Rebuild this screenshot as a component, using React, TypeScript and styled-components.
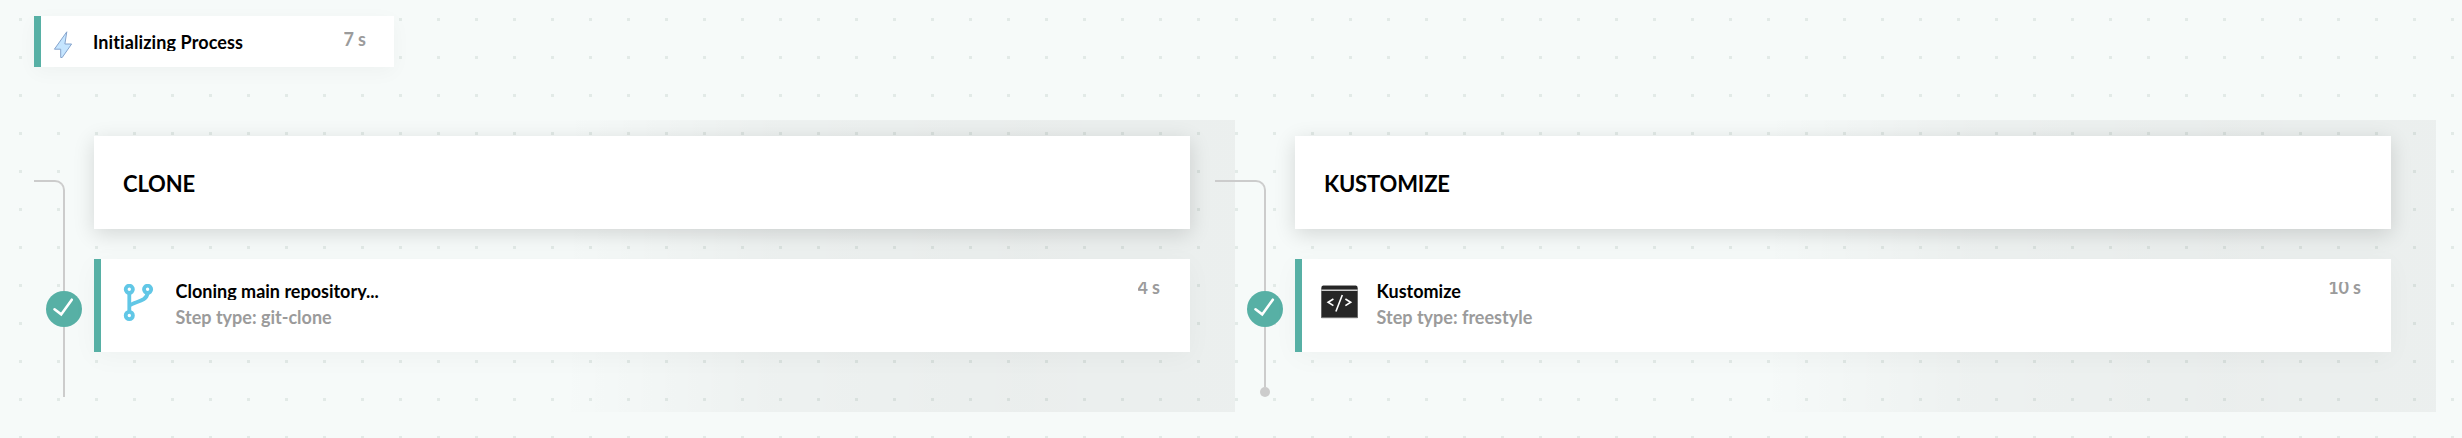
import React from 'react';
import styled, { createGlobalStyle } from 'styled-components';

const GlobalStyle = createGlobalStyle`
  *, *::before, *::after { box-sizing: border-box; }
  body {
    margin: 0;
    background: #f6faf9;
    font-family: Lato, sans-serif;
    font-variant-ligatures: none;
  }
`;

const Page = styled.main`
  height: 438px;
  padding: 16px 26px 0 34px;
  overflow: hidden;
  background-color: #f6faf9;
  background-image: conic-gradient(from 90deg at 35px 35px, #e2eae7 90deg, transparent 0);
  background-size: 38px 38px;
  background-position: -16px -17px;
`;

const InitCard = styled.section`
  display: flex;
  align-items: flex-start;
  width: 360px;
  height: 51px;
  border-left: 7px solid #57b0a5;
  padding: 0 28px 0 12px;
  background: #fff;
  box-shadow: 0 5px 20px rgba(0, 0, 0, 0.035);
`;

const BoltSlot = styled.span`
  display: flex;
  width: 40px;
  padding-top: 15px;
`;

const Title = styled.div<{ $top?: number; $spacing?: number }>`
  margin-top: ${(p) => p.$top ?? 0}px;
  height: 20px;
  overflow: hidden;
  font-size: 18px;
  font-weight: 700;
  line-height: 22px;
  letter-spacing: ${(p) => p.$spacing ?? 0}px;
  white-space: nowrap;
  color: #000;
`;

const Time = styled.div<{ $top: number; $cut?: boolean }>`
  margin: ${(p) => p.$top}px 0 0 auto;
  height: ${(p) => (p.$cut ? 16 : 24)}px;
  overflow: hidden;
  font-size: 18px;
  font-weight: 700;
  word-spacing: -0.3px;
  line-height: ${(p) => (p.$cut ? 10 : 24)}px;
  white-space: nowrap;
  color: #9b9b9b;
`;

const Stages = styled.div`
  display: flex;
  margin-top: 53px;
`;

const Stage = styled.section`
  display: flex;
  width: 1201px;
  height: 292px;
  padding-right: 45px;
  background: linear-gradient(91deg, transparent 44%, rgba(0, 0, 0, 0.035) 61%, rgba(0, 0, 0, 0.047) 82%, rgba(0, 0, 0, 0.042));
`;

const Rail = styled.div`
  flex: none;
  width: 60px;
  padding-top: 60px;
`;

const RailTop = styled.div<{ $reach: number }>`
  width: ${(p) => 31 + p.$reach}px;
  height: 111px;
  margin-left: ${(p) => -p.$reach}px;
  border: solid #ccc;
  border-width: 2px 2px 0 0;
  border-top-right-radius: 10px;
`;

const StatusBadge = styled.div`
  display: flex;
  width: 36px;
  height: 36px;
  margin-left: 12px;
  border-radius: 50%;
  background: #57b0a5;
`;

const RailBottom = styled.div<{ $length: number }>`
  width: 2px;
  height: ${(p) => p.$length}px;
  margin-left: 29px;
  background: #ccc;
`;

const RailEnd = styled.div`
  width: 10px;
  height: 10px;
  margin-left: 25px;
  border-radius: 50%;
  background: #ccc;
`;

const StageBody = styled.div`
  flex: 1;
  display: flex;
  flex-direction: column;
  gap: 30px;
  padding-top: 16px;
`;

const StageHeader = styled.h2`
  display: flex;
  align-items: center;
  height: 93px;
  margin: 0;
  padding: 1px 29px 0;
  background: #fff;
  font-size: 22px;
  font-weight: 700;
  letter-spacing: -0.15px;
  color: #000;
  box-shadow: 0 5px 20px rgba(0, 0, 0, 0.14);
`;

const StepCard = styled.article`
  display: flex;
  height: 93px;
  padding-right: 30px;
  border-left: 7px solid #57b0a5;
  background: #fff;
  box-shadow: 0 5px 25px rgba(0, 0, 0, 0.035);
`;

const StepIcon = styled.span`
  display: flex;
  width: 74.6px;
  padding: 25px 0 0 19px;
`;

const StepText = styled.div`
  display: flex;
  flex-direction: column;
`;

const StepType = styled.div`
  font-size: 18px;
  font-weight: 700;
  line-height: 26px;
  margin-top: 4px;
  color: #9b9b9b;
`;

const Check = () => (
  <svg width="36" height="36" viewBox="0 0 36 36" fill="none">
    <path d="M8.5 18.3 15.2 23.4 25.8 8.7" stroke="#fff" strokeWidth="2.6" strokeLinecap="round" />
  </svg>
);

const Bolt = () => (
  <svg width="20" height="27" viewBox="0 0 20 27">
    <path d="M13.8.8 1.4 18.2h6.3v8.3h1.5L18.6 13h-6.7Z" fill="#c5e5ff" stroke="#85a3cc" strokeWidth="1" />
  </svg>
);

const Branch = () => (
  <svg width="34" height="40" viewBox="0 0 34 40" fill="none" stroke="#61c7e6" strokeWidth="3.8">
    <circle cx="9.3" cy="5.3" r="3.6" />
    <circle cx="27.6" cy="5.3" r="3.6" />
    <circle cx="9.3" cy="31.5" r="3.6" />
    <path d="M9.3 9v19M9.3 22C13 17.5 26.8 18 27.6 9" />
  </svg>
);

const CodeWindow = () => (
  <svg width="37" height="35" viewBox="0 0 37 35">
    <path d="M.3 34V4Q.3 1.6 2.7 1.6h31.6Q36.7 1.6 36.7 4v30Z" fill="#262626" />
    <path d="M.5 33.8h36M2 1.5h33" stroke="#999" strokeWidth="0.9" />
    <path d="M.3 6.3h36.4" stroke="#ccc" strokeWidth="1.6" />
    <path d="M12.4 15 7.1 18.3 12.4 21.6M24.4 15 29.7 18.3 24.4 21.6M21.3 11 14.9 27.5" fill="none" stroke="#fff" strokeWidth="1.6" />
  </svg>
);

interface StageProps {
  name: string;
  step: string;
  type: string;
  time: string;
  icon: React.ReactNode;
  reach?: number;
  last?: boolean;
}

const PipelineStage = ({ name, step, type, time, icon, reach = 0, last }: StageProps) => (
  <Stage>
    <Rail>
      <RailTop $reach={reach} />
      <StatusBadge>
        <Check />
      </StatusBadge>
      <RailBottom $length={last ? 60 : 70} />
      {last && <RailEnd />}
    </Rail>
    <StageBody>
      <StageHeader>{name}</StageHeader>
      <StepCard>
        <StepIcon>{icon}</StepIcon>
        <StepText>
          <Title $top={21}>{step}</Title>
          <StepType>{type}</StepType>
        </StepText>
        <Time $top={23} $cut>
          {time}
        </Time>
      </StepCard>
    </StageBody>
  </Stage>
);

export default function App() {
  return (
    <>
      <GlobalStyle />
      <Page>
        <InitCard>
          <BoltSlot>
            <Bolt />
          </BoltSlot>
          <Title $top={15} $spacing={0.1}>
            Initializing Process
          </Title>
          <Time $top={11}>7 s</Time>
        </InitCard>
        <Stages>
          <PipelineStage name="CLONE" step="Cloning main repository..." type="Step type: git-clone" time="4 s" icon={<Branch />} />
          <PipelineStage name="KUSTOMIZE" step="Kustomize" type="Step type: freestyle" time="10 s" icon={<CodeWindow />} reach={20} last />
        </Stages>
      </Page>
    </>
  );
}
